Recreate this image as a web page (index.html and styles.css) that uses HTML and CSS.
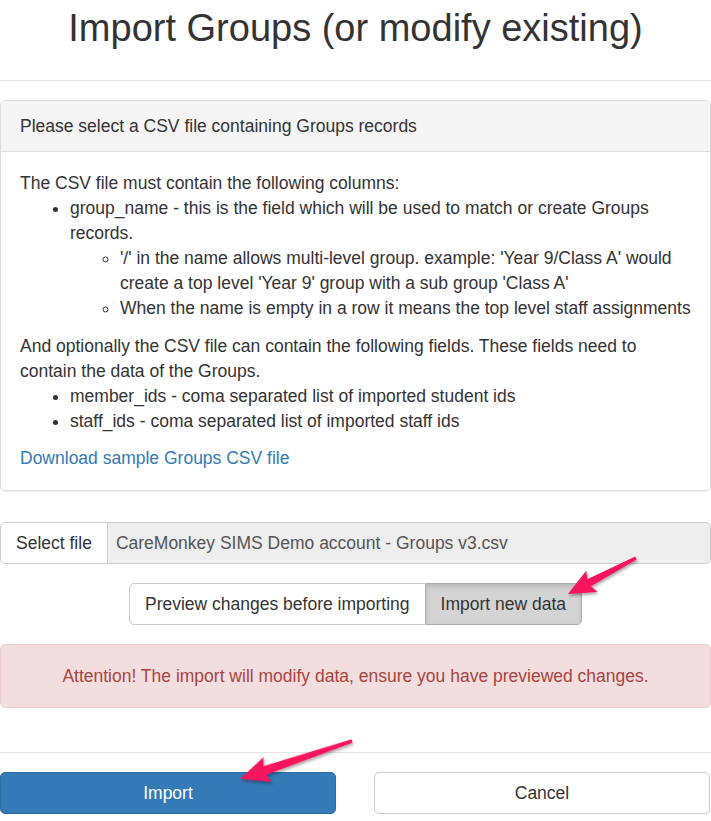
FILE: index.html
```html
<!DOCTYPE html>
<html>
<head>
<meta charset="utf-8">
<link rel="stylesheet" href="styles.css">
</head>
<body>
<div class="page">
  <header class="header">
    <h1 class="title">Import Groups (or modify existing)</h1>
  </header>

  <section class="panel">
    <div class="panel-heading">Please select a CSV file containing Groups records</div>
    <div class="panel-body">
      <div>The CSV file must contain the following columns:</div>
      <ul class="list">
        <li><b class="field">group_name</b> - this is the field which will be used to match or create Groups records.
          <ul class="sublist">
            <li>'/' in the name allows multi-level group. example: 'Year 9/Class A' would create a top level 'Year 9' group with a sub group 'Class A'</li>
            <li>When the name is empty in a row it means the top level staff assignments</li>
          </ul>
        </li>
      </ul>
      <div>And optionally the CSV file can contain the following fields. These fields need to contain the data of the Groups.</div>
      <ul class="list">
        <li><b class="field">member_ids</b> - coma separated list of imported student ids</li>
        <li><b class="field">staff_ids</b> - coma separated list of imported staff ids</li>
      </ul>
      <div><a class="link" href="#">Download sample Groups CSV file</a></div>
    </div>
  </section>

  <div class="file-group">
    <span class="file-btn">Select file</span>
    <span class="file-name">CareMonkey SIMS Demo account - Groups v3.csv</span>
  </div>

  <div class="mode-row">
    <div class="btn-group">
      <span class="btn">Preview changes before importing</span>
      <span class="btn active">Import new data</span>
    </div>
  </div>

  <div class="alert">Attention! The import will modify data, ensure you have previewed changes.</div>

  <footer class="footer">
    <span class="btn-lg primary">Import</span>
    <span class="btn-lg default">Cancel</span>
  </footer>

  <svg class="arrows" width="711" height="821" viewBox="0 0 711 821">
    <defs>
      <filter id="sh" x="-20%" y="-50%" width="140%" height="200%">
        <feDropShadow dx="1" dy="2" stdDeviation="1.5" flood-color="#000" flood-opacity="0.35"/>
      </filter>
    </defs>
    <g filter="url(#sh)" fill="#f7125d">
      <polygon transform="translate(636,558) rotate(152.1)" points="0,-1.6 53,-4 50,-12 77,0 50,12 53,4 0,1.6"/>
      <polygon transform="translate(352,741) rotate(161.3)" points="0,-1.8 92,-4.5 89,-13 118,0 89,13 92,4.5 0,1.8"/>
    </g>
  </svg>
</div>
</body>
</html>
```

FILE: styles.css
```css
* { box-sizing: border-box; }
html, body { margin: 0; padding: 0; background: #fff; }
body {
  font-family: "Liberation Sans", Arial, Helvetica, sans-serif;
  font-size: 17.5px;
  line-height: 25px;
  color: #333;
}
.page {
  position: relative;
  width: 711px;
  height: 821px;
  overflow: hidden;
}
.header {
  height: 81px;
  border-bottom: 1px solid #e5e5e5;
  text-align: center;
}
.title {
  margin: 0;
  padding-top: 8px;
  font-size: 38px;
  line-height: 41px;
  font-weight: normal;
  color: #333;
}
.panel {
  margin-top: 19px;
  width: 711px;
  border: 1px solid #ddd;
  border-radius: 5px;
  box-shadow: 0 1px 1px rgba(0,0,0,0.05);
}
.panel-heading {
  background: #f5f5f5;
  border-bottom: 1px solid #ddd;
  padding: 12.5px 19px;
  border-radius: 4px 4px 0 0;
}
.panel-body {
  padding: 19px 19px 19px 19px;
}
.list {
  margin: 0 0 12.5px 0;
  padding-left: 50px;
}
.sublist {
  margin: 0;
  padding-left: 50px;
  list-style-type: circle;
}
.field { font-weight: normal; }
.link { color: #337ab7; text-decoration: none; }

.file-group {
  margin-top: 31px;
  display: flex;
  height: 42px;
  width: 711px;
}
.file-btn {
  display: flex;
  align-items: center;
  padding: 0 15px;
  background: #fff;
  border: 1px solid #ccc;
  border-radius: 5px 0 0 5px;
  color: #333;
}
.file-name {
  flex: 1;
  display: flex;
  align-items: center;
  padding: 0 8px;
  background: #eee;
  border: 1px solid #ccc;
  border-left: none;
  border-radius: 0 5px 5px 0;
  color: #555;
}
.mode-row {
  margin-top: 19px;
  display: flex;
  justify-content: center;
}
.btn-group { display: flex; }
.btn {
  display: inline-flex;
  align-items: center;
  height: 42px;
  padding: 0 15px;
  border: 1px solid #ccc;
  background: #fff;
  color: #333;
}
.btn:first-child { border-radius: 5px 0 0 5px; }
.btn:last-child { border-radius: 0 5px 5px 0; margin-left: -1px; }
.btn.active {
  background: #d4d4d4;
  border-color: #adadad;
  box-shadow: inset 0 3px 5px rgba(0,0,0,0.125);
}
.alert {
  margin-top: 19px;
  padding: 18.5px 19px;
  background: #f2dede;
  border: 1px solid #ebccd1;
  border-radius: 5px;
  color: #a94442;
  text-align: center;
}
.footer {
  margin-top: 44px;
  border-top: 1px solid #e5e5e5;
  padding-top: 19px;
  display: grid;
  grid-template-columns: 336px 336px;
  column-gap: 38px;
}
.btn-lg {
  height: 42px;
  display: flex;
  align-items: center;
  justify-content: center;
  border-radius: 5px;
  border: 1px solid #ccc;
}
.btn-lg.primary {
  background: #337ab7;
  border-color: #2e6da4;
  color: #fff;
}
.btn-lg.default {
  background: #fff;
  color: #333;
}
.arrows {
  position: absolute;
  left: 0;
  top: 0;
  pointer-events: none;
}
```
